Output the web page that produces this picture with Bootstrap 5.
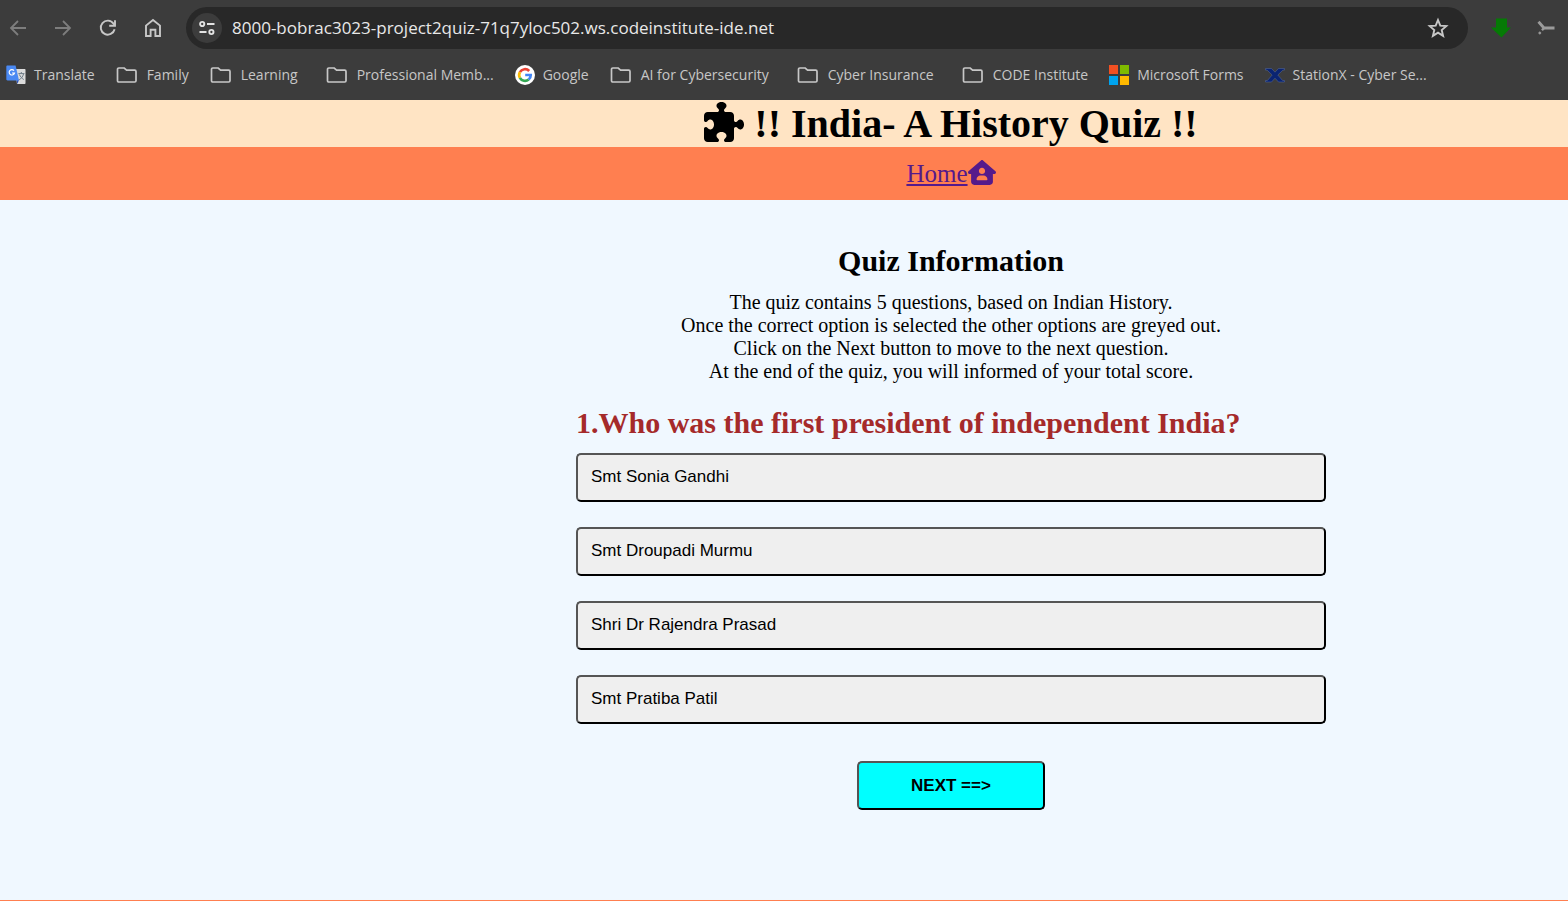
<!DOCTYPE html>
<html lang="en">
<head>
<meta charset="utf-8">
<meta name="viewport" content="width=device-width, initial-scale=1">
<title>India- A History Quiz</title>
<link href="https://cdn.jsdelivr.net/npm/bootstrap@5.3.0/dist/css/bootstrap.min.css" rel="stylesheet">
<style>
  body { font-family: "Liberation Serif", "Times New Roman", serif; color: #000; background: #f0f8ff; overflow-x: hidden; }

  /* Browser bar */
  .browser { background: #3c3c3c; color: #c7c7c7; font-family: "Open Sans", "Noto Sans", sans-serif; height: 100px; padding-top: 7px; }
  .toolbar { gap: 21px; padding: 0 10px 0 6px; }
  .tool { width: 24px; height: 24px; padding: 0; border: 0; background: none; color: #c7c7c7; display: flex; align-items: center; justify-content: center; flex: none; }
  .tool:disabled { color: #7d7d7d; }
  .address { background: #282828; height: 42px; border-radius: 21px; padding: 0 18px 0 6px; gap: 10px; min-width: 0; }
  .site-info { width: 30px; height: 30px; border-radius: 50%; background: #3c3c3c; }
  .address input { background: none; border: 0; outline: 0; padding: 0; color: #e8e8e8; font-size: 17px; line-height: 24px; min-width: 0; }
  .bookmarks { gap: 21px; padding: 0 6px; margin-top: 14px; white-space: nowrap; overflow: hidden; }
  .bookmarks a { color: inherit; font-size: 14px; line-height: 24px; gap: 8px; text-decoration: none; display: flex; align-items: center; }
  .bookmarks .folder { gap: 9px; }
  .bookmarks .roomy { margin-right: 7px; }

  /* Quiz page, centred on a canvas that reaches past the window's right edge */
  .shifted { padding-left: 334px; }
  .title-band { background: #ffe4c4; }
  .title-band h1 { font-size: 40px; line-height: 47px; font-weight: 700; gap: 10px; }
  .title-band svg { margin-bottom: 3px; }
  .nav-band { background: #ff7f50; height: 53px; }
  .nav-band a { color: #551a8b; font-size: 25px; line-height: 29px; text-underline-offset: 2px; text-decoration-thickness: 2px; }
  .nav-band svg { margin-bottom: 2px; }
  .quiz { padding-top: 43px; padding-bottom: 40px; }
  .quiz-body { max-width: 750px; }
  .quiz h2 { font-size: 30px; line-height: 35px; font-weight: 700; }
  .info { font-size: 20px; line-height: 23px; margin: 13px 0 22px; }
  .question { color: #a52a2a; margin-bottom: 13px; }
  .options { gap: 25px; }
  .quiz-btn { font: 17px/20px "Liberation Sans", Arial, sans-serif; height: 49px; padding: 0 13px 2px; border: 2px solid; border-color: #555 #000 #000 #555; border-radius: 5px; background: #efefef; color: #000; text-align: left; }
  .next-btn { width: 188px; margin-top: 37px; padding-bottom: 0; background: #0ff; font-weight: 700; text-align: center; }
  .page-foot { border-top: 1px solid #ff7f50; }
</style>
</head>
<body class="d-flex flex-column min-vh-100">

<svg class="d-none" aria-hidden="true">
  <symbol id="folder" viewBox="0 0 22 18"><path d="M2.8 2h5.400l2.400 2.200h8.100c.8 0 1.300.5 1.300 1.300v9.200c0 .8-.5 1.300-1.300 1.300H2.800c-.8 0-1.300-.5-1.300-1.300V3.300c0-.8.5-1.300 1.300-1.300z" fill="none" stroke="currentColor" stroke-width="1.7"/></symbol>
</svg>

<div class="browser">
  <div class="toolbar d-flex align-items-center">
    <button class="tool" disabled aria-label="Back"><svg width="18" height="18" viewBox="0 0 18 18" fill="none" stroke="currentColor" stroke-width="1.8"><path d="M17 9H2.500M9 2L2 9l7 7"/></svg></button>
    <button class="tool" disabled aria-label="Forward"><svg width="18" height="18" viewBox="0 0 18 18" fill="none" stroke="currentColor" stroke-width="1.8"><path d="M1 9h14.500M9 2l7 7-7 7"/></svg></button>
    <button class="tool" aria-label="Reload"><svg width="18" height="18" viewBox="0 0 18 18" fill="none" stroke="currentColor" stroke-width="1.9"><path d="M15.600 10.200A7 7 0 1 1 14.500 4.600L15.600 6"/><path d="M16 1.200v5.600h-5.800"/></svg></button>
    <button class="tool" aria-label="Home"><svg width="18" height="20" viewBox="0 0 18 20" fill="none" stroke="currentColor" stroke-width="1.9"><path d="M2 18V7.600L9 2l7 5.600V18h-4.600v-6.200H6.600V18z"/></svg></button>
    <div class="address d-flex align-items-center flex-grow-1">
      <button class="tool site-info" aria-label="Site information"><svg width="16" height="16" viewBox="0 0 16 16" fill="none" stroke="#e3e3e3" stroke-width="1.9"><circle cx="3.2" cy="4" r="2.1"/><path d="M8 4h7.500M.5 12h7"/><circle cx="12.4" cy="12" r="2.1"/></svg></button>
      <input class="flex-grow-1" type="text" aria-label="Address" value="8000-bobrac3023-project2quiz-71q7yloc502.ws.codeinstitute-ide.net">
      <button class="tool" aria-label="Bookmark this page"><svg width="22" height="22" viewBox="0 0 22 22" fill="none" stroke="currentColor" stroke-width="1.9"><path d="M11 3l2.300 5.600 6 .5-4.600 3.900 1.400 5.900-5.100-3.200-5.100 3.200L7.300 13 2.700 9.100l6-.5z"/></svg></button>
    </div>
    <button class="tool" aria-label="Download"><svg width="20" height="20" viewBox="0 0 20 20"><path d="M5 .5h11v9h4L10.500 19.500 0 9.500h5z" fill="#057a05"/></svg></button>
    <button class="tool" aria-label="Extension"><svg width="18" height="16" viewBox="0 0 18 16" fill="none" stroke="#9b9b9b"><path d="M1.500 1.800L7 8h10.500" stroke-width="2.8"/><path d="M7 8l-2 2.200" stroke-width="2.4"/><circle cx="2.8" cy="13" r="1" fill="#9b9b9b"/></svg></button>
  </div>
  <nav class="bookmarks d-flex align-items-center" aria-label="Bookmarks">
    <a href="#"><svg width="20" height="20" viewBox="0 0 20 20"><path d="M9 4h9.500c.7 0 1 .4 1 1v13c0 .7-.4 1-1 1H11z" fill="#dcdcdc"/><path d="M12.400 8.600h6M15.300 7v1.600M17.600 8.800c-.8 3-2.400 4.800-4.400 6M13.400 9.500c1 2.200 2.300 3.800 4.400 5" stroke="#6d7b86" fill="none"/><path d="M10.500 15.500l2.500-1-1.500 4.500z" fill="#2a4fb5"/><path d="M1.500.5H9.600L13 15.500H1.500c-.7 0-1.200-.5-1.200-1.200V1.700C.3 1 .8.5 1.500.5z" fill="#4a89f3"/><path d="M8 5.600A2.700 2.700 0 1 0 8.500 8H6" stroke="#fff" stroke-width="1.2" fill="none"/></svg>Translate</a>
    <a href="#" class="folder"><svg width="22" height="18"><use href="#folder"/></svg>Family</a>
    <a href="#" class="folder roomy"><svg width="22" height="18"><use href="#folder"/></svg>Learning</a>
    <a href="#" class="folder"><svg width="22" height="18"><use href="#folder"/></svg>Professional Memb...</a>
    <a href="#"><svg width="20" height="20" viewBox="0 0 20 20"><circle cx="10" cy="10" r="10" fill="#fff"/><g fill="none" stroke-width="2.7"><path d="M14.200 6A5.800 5.800 0 0 0 4.900 7.200" stroke="#ea4335"/><path d="M4.900 7.200a5.800 5.800 0 0 0 0 5.600" stroke="#fbbc05"/><path d="M4.900 12.800a5.800 5.800 0 0 0 8.800 1.700" stroke="#34a853"/><path d="M13.700 14.500A5.800 5.800 0 0 0 15.700 10H10.200" stroke="#4285f4"/></g></svg>Google</a>
    <a href="#" class="folder roomy"><svg width="22" height="18"><use href="#folder"/></svg>AI for Cybersecurity</a>
    <a href="#" class="folder roomy"><svg width="22" height="18"><use href="#folder"/></svg>Cyber Insurance</a>
    <a href="#" class="folder"><svg width="22" height="18"><use href="#folder"/></svg>CODE Institute</a>
    <a href="#"><svg width="20" height="20" viewBox="0 0 20 20"><path d="M0 0h9v9H0z" fill="#f25022"/><path d="M11 0h9v9h-9z" fill="#7fba00"/><path d="M0 11h9v9H0z" fill="#00a4ef"/><path d="M11 11h9v9h-9z" fill="#ffb900"/></svg>Microsoft Forms</a>
    <a href="#"><svg width="20" height="20" viewBox="0 0 20 20"><path d="M.5 3.500h6L10 7.200l3.500-3.700h6v1.600h-1.600L12.800 10l4.800 5.500h1.900V17h-6L10 13.200 6.500 17h-6v-1.500h1.900L7.200 10 2.100 5.100H.5z" fill="#0a2472" stroke="#5a6c9c" stroke-width=".5"/></svg>StationX - Cyber Se...</a>
  </nav>
</div>

<header>
  <div class="title-band shifted">
    <h1 class="d-flex justify-content-center align-items-center m-0"><svg width="40" height="40" viewBox="0 0 512 512" fill="currentColor" aria-hidden="true"><path d="M192 104.800c0-9.200-5.800-17.300-13.200-22.800C167.200 73.300 160 61.300 160 48c0-26.500 28.700-48 64-48s64 21.500 64 48c0 13.300-7.200 25.300-18.800 34c-7.400 5.500-13.200 13.600-13.200 22.800c0 12.800 10.400 23.200 23.200 23.200H336c26.500 0 48 21.500 48 48v56.800c0 12.800 10.400 23.200 23.200 23.200c9.200 0 17.300-5.800 22.800-13.200c8.700-11.600 20.700-18.800 34-18.800c26.500 0 48 28.700 48 64s-21.500 64-48 64c-13.300 0-25.300-7.200-34-18.800c-5.500-7.400-13.600-13.200-22.800-13.200c-12.800 0-23.200 10.400-23.200 23.200V464c0 26.500-21.500 48-48 48H279.200c-12.800 0-23.200-10.400-23.200-23.200c0-9.200 5.800-17.300 13.200-22.800c11.600-8.700 18.800-20.700 18.800-34c0-26.500-28.700-48-64-48s-64 21.500-64 48c0 13.300 7.200 25.300 18.800 34c7.400 5.500 13.200 13.600 13.200 22.800c0 12.800-10.400 23.200-23.200 23.200H48c-26.500 0-48-21.500-48-48V343.200C0 330.400 10.400 320 23.200 320c9.200 0 17.300 5.800 22.800 13.200C54.700 344.800 66.700 352 80 352c26.500 0 48-28.700 48-64s-21.500-64-48-64c-13.300 0-25.300 7.200-34 18.800C40.500 250.200 32.400 256 23.200 256C10.400 256 0 245.600 0 232.800V176c0-26.500 21.500-48 48-48H168.800c12.800 0 23.200-10.400 23.200-23.200z"/></svg>!! India- A History Quiz !!</h1>
  </div>
  <nav class="nav-band shifted d-flex justify-content-center align-items-center" aria-label="Main">
    <a href="#" class="d-flex align-items-center">Home<svg width="28" height="25" viewBox="0 0 576 512" fill="currentColor" aria-hidden="true"><path fill-rule="evenodd" d="M575.800 255.500c0 18-15 32.100-32 32.100h-32l.7 160.200c.2 35.500-28.500 64.300-64 64.300H128.100c-35.300 0-64-28.700-64-64V287.600H32c-18 0-32-14-32-32.100c0-9 3-17 10-24L266.400 8c7-7 15-8 22-8s15 2 21 7L564.800 231.500c8 7 12 15 11 24zM352 224c0-35.300-28.700-64-64-64s-64 28.700-64 64s28.700 64 64 64s64-28.700 64-64zm-96 96c-44.200 0-80 35.800-80 80c0 8.800 7.200 16 16 16H384c8.800 0 16-7.200 16-16c0-44.200-35.800-80-80-80H256z"/></svg></a>
  </nav>
</header>

<main class="quiz shifted flex-grow-1">
  <div class="quiz-body mx-auto">
    <h2 class="text-center m-0">Quiz Information</h2>
    <p class="info text-center">The quiz contains 5 questions, based on Indian History.<br>Once the correct option is selected the other options are greyed out.<br>Click on the Next button to move to the next question.<br>At the end of the quiz, you will informed of your total score.</p>
    <h2 class="question">1.Who was the first president of independent India?</h2>
    <div class="options d-grid">
      <button type="button" class="quiz-btn">Smt Sonia Gandhi</button>
      <button type="button" class="quiz-btn">Smt Droupadi Murmu</button>
      <button type="button" class="quiz-btn">Shri Dr Rajendra Prasad</button>
      <button type="button" class="quiz-btn">Smt Pratiba Patil</button>
    </div>
    <button type="button" class="quiz-btn next-btn d-block mx-auto">NEXT ==&gt;</button>
  </div>
</main>
<footer class="page-foot"></footer>

<script src="https://cdn.jsdelivr.net/npm/bootstrap@5.3.0/dist/js/bootstrap.bundle.min.js"></script>
</body>
</html>
